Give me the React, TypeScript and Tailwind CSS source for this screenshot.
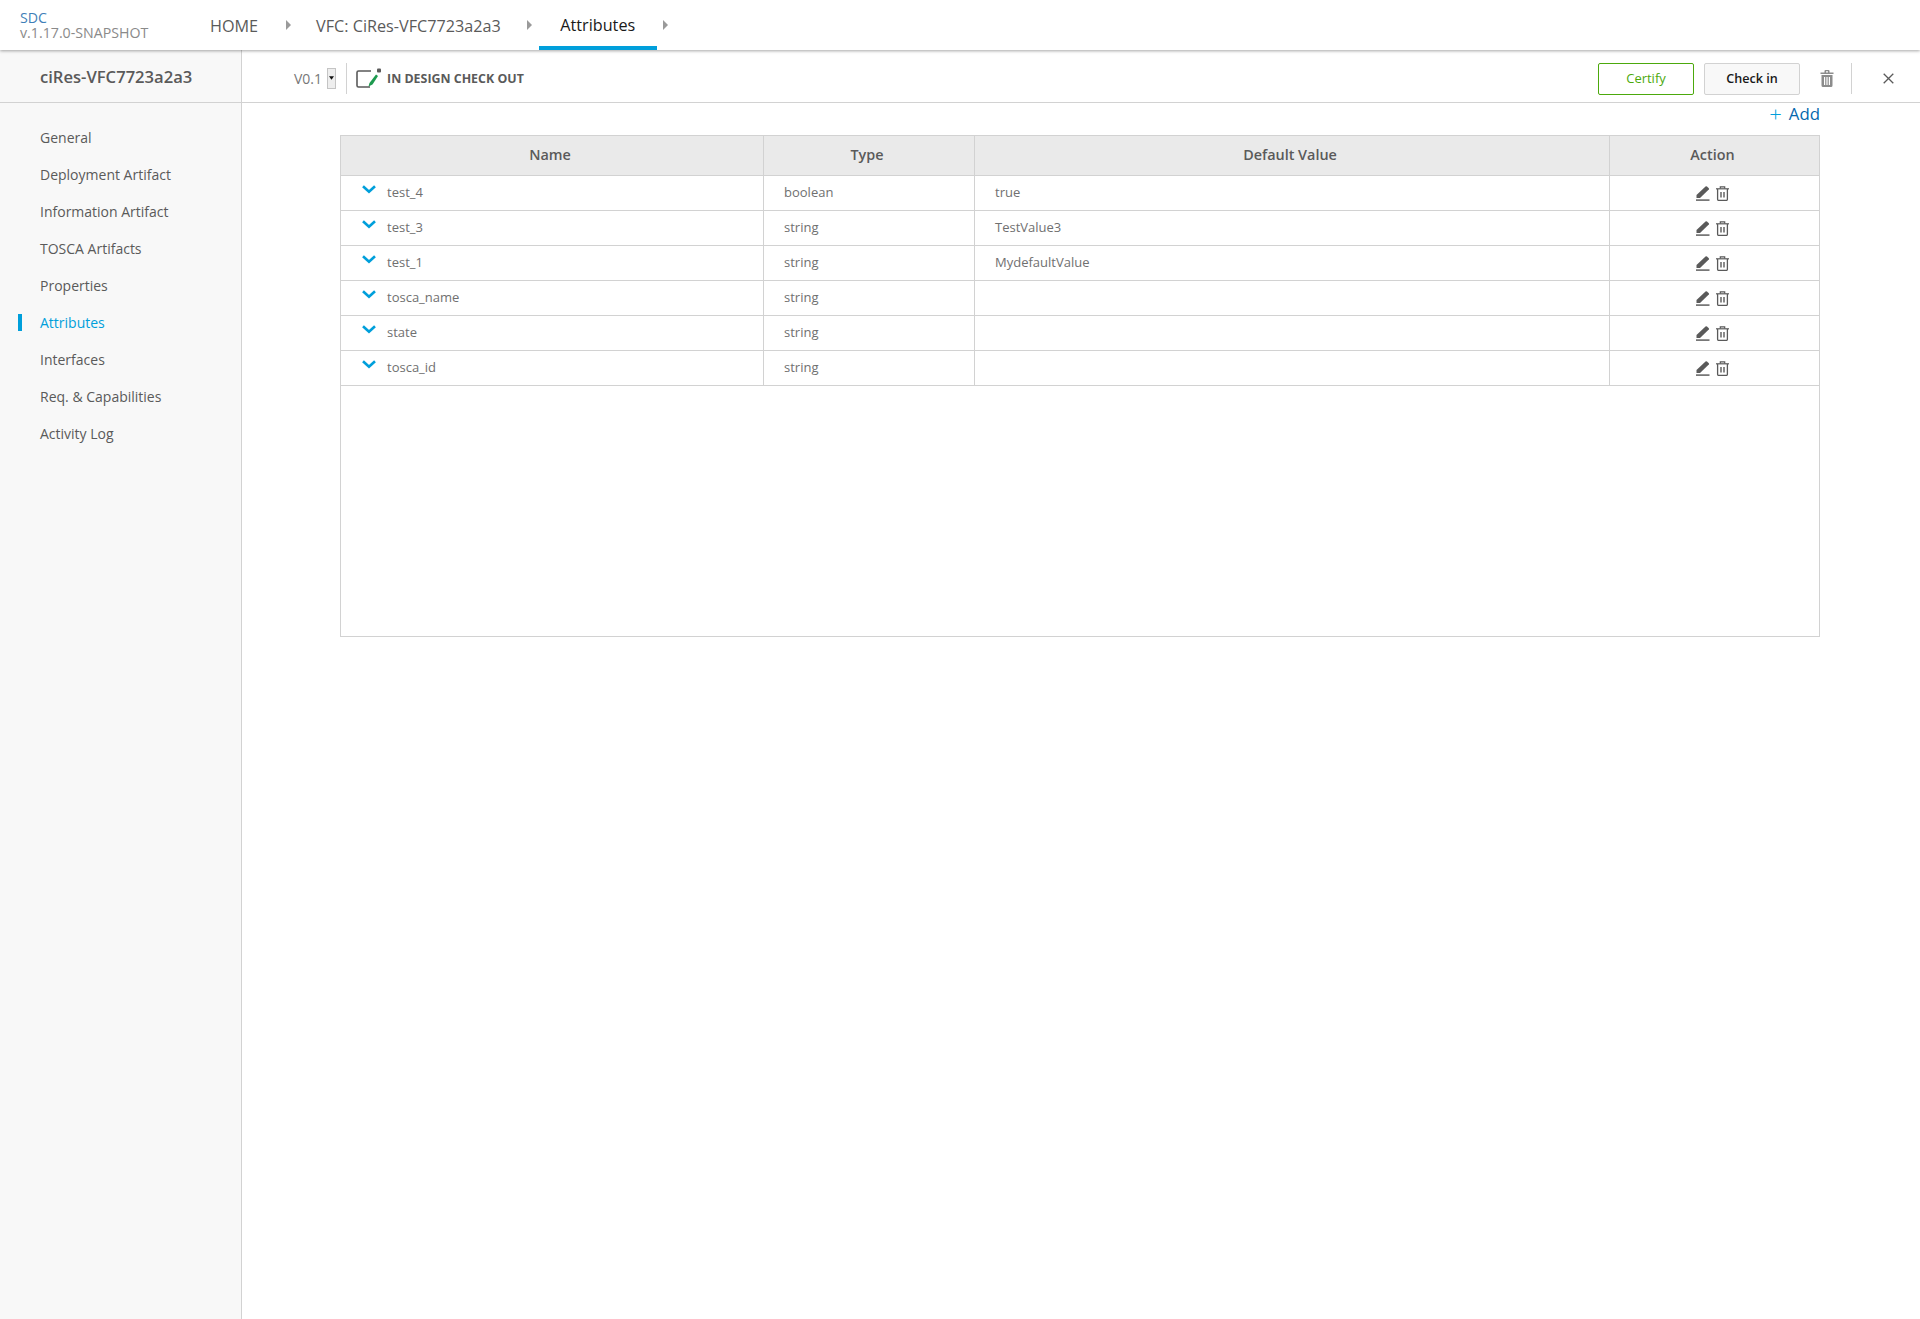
const navItems = [
  'General',
  'Deployment Artifact',
  'Information Artifact',
  'TOSCA Artifacts',
  'Properties',
  'Attributes',
  'Interfaces',
  'Req. & Capabilities',
  'Activity Log',
];

const rows = [
  { name: 'test_4', type: 'boolean', value: 'true' },
  { name: 'test_3', type: 'string', value: 'TestValue3' },
  { name: 'test_1', type: 'string', value: 'MydefaultValue' },
  { name: 'tosca_name', type: 'string', value: '' },
  { name: 'state', type: 'string', value: '' },
  { name: 'tosca_id', type: 'string', value: '' },
];

const Caret = ({ className }: { className: string }) => (
  <svg width="5" height="10" viewBox="0 0 5 10" className={className}>
    <path d="M0 0L5 5L0 10Z" fill="#9a9a9a" />
  </svg>
);

const Chevron = () => (
  <svg width="14" height="9" viewBox="0 0 14 9" className="absolute left-[21px] top-[9px]">
    <path d="M1 1.2L7 6.8L13 1.2" fill="none" stroke="#009fdb" strokeWidth="2.6" />
  </svg>
);

const PencilIcon = () => (
  <svg width="14" height="15" viewBox="0 0 14 15">
    <path d="M0.5 9L9.5 0.5Q10.3 0 11 0.5L12.8 2.2Q13.3 2.9 12.8 3.6L4 12H0.5Z" fill="#5a5a5a" />
    <rect x="0" y="13.3" width="13.5" height="1.6" fill="#6a6a6a" />
  </svg>
);

const TrashIcon = () => (
  <svg width="13" height="15" viewBox="0 0 13 15" fill="none" stroke="#5a5a5a">
    <path d="M0 2.8H13" strokeWidth="1.2" />
    <path d="M4.3 2.5V0.8H8.7V2.5" strokeWidth="1.2" />
    <path d="M1.6 3V13.2Q1.6 14.4 2.8 14.4H10.2Q11.4 14.4 11.4 13.2V3" strokeWidth="1.3" />
    <path d="M5 6V11.5M8 6V11.5" strokeWidth="1.4" />
  </svg>
);

const App = () => {
  return (
    <div className="flex h-[1319px] w-[1920px] flex-col overflow-hidden bg-white font-['Open_Sans',sans-serif] text-[#5a5a5a]">
      <header className="relative z-10 flex h-[50px] shrink-0 items-center bg-white shadow-[0_1px_3px_rgba(0,0,0,0.35)]">
        <div className="w-[191px] pb-[1px] pl-[20px] text-[14.2px] leading-[15px]">
          <div className="text-[#3f7fb8]">SDC</div>
          <div className="text-[#8a8a8a]">v.1.17.0-SNAPSHOT</div>
        </div>
        <div className="flex h-full items-center text-[16.2px]">
          <span className="ml-[19px] pt-[2px]">HOME</span>
          <Caret className="ml-[28px]" />
          <span className="ml-[25px] pt-[2px]">VFC: CiRes-VFC7723a2a3</span>
          <Caret className="ml-[26px]" />
          <span className="ml-[7px] flex h-full w-[118px] items-center justify-center border-b-[4px] border-[#009fdb] pt-[5px] font-medium text-[#191919]">
            Attributes
          </span>
          <Caret className="ml-[6px]" />
        </div>
      </header>

      <div className="flex min-h-0 flex-1">
        <aside className="w-[242px] shrink-0 border-r border-[#d2d2d2] bg-[#f8f8f8]">
          <div className="flex h-[53px] items-center border-b border-[#d2d2d2] pl-[40px] pt-[2px] text-[16.6px] font-semibold">
            ciRes-VFC7723a2a3
          </div>
          <nav className="flex flex-col pt-[16px]">
            {navItems.map((item) => (
              <div key={item} className="relative flex h-[37px] items-center pl-[40px] text-[14px]">
                {item === 'Attributes' && (
                  <span className="absolute left-[18px] top-[10px] h-[17px] w-[4px] bg-[#009fdb]" />
                )}
                <span className={item === 'Attributes' ? 'text-[#009fdb]' : ''}>{item}</span>
              </div>
            ))}
          </nav>
        </aside>

        <main className="min-w-0 flex-1">
          <div className="flex h-[53px] items-center border-b border-[#d2d2d2] pl-[52px] pr-[20px] pt-[4px]">
            <span className="text-[14px] text-[#777777]">V0.1</span>
            <span className="ml-[5px] flex h-[21px] w-[9px] items-center justify-center border border-[#c4c4c4] bg-[#eeeeee]">
              <svg width="5" height="4" viewBox="0 0 6 4">
                <path d="M0 0H6L3 4Z" fill="#111111" />
              </svg>
            </span>
            <span className="ml-[10px] h-[31px] w-px bg-[#d2d2d2]" />
            <svg width="26" height="20" viewBox="0 0 26 20" className="ml-[9px]">
              <path d="M15 3H2.5Q1 3 1 4.5V17.5Q1 19 2.5 19H14" fill="none" stroke="#5a5a5a" strokeWidth="1.6" />
              <rect x="21" y="0.5" width="4" height="4" rx="1" fill="#5a5a5a" />
              <path d="M20 6.5L22 8L16.5 16.5L12.5 18.5L13.5 15Z" fill="#1d9a4f" />
            </svg>
            <span className="ml-[5px] pt-[2px] text-[12.4px] font-bold">IN DESIGN CHECK OUT</span>

            <div className="ml-auto flex items-center pt-[1px]">
              <button className="h-[32px] w-[96px] rounded-[2px] border border-[#4ca90c] bg-white pt-[1px] text-[13px] font-medium text-[#4ca90c]">
                Certify
              </button>
              <button className="ml-[10px] h-[32px] w-[96px] rounded-[2px] border border-[#d2d2d2] bg-[#f8f8f8] pt-[1px] text-[12.6px] font-semibold text-[#191919]">
                Check in
              </button>
              <svg width="14" height="17" viewBox="0 0 14 17" className="ml-[20px]" fill="#8c8c8c">
                <path d="M0.5 2.5H4.5V1Q4.5 0 5.5 0H8.5Q9.5 0 9.5 1V2.5H13.5V4H0.5ZM6 1.2V2.5H8V1.2Z" />
                <path d="M1.5 5H12.5V15.5Q12.5 17 11 17H3Q1.5 17 1.5 15.5ZM4 7V15H5.2V7ZM6.4 7V15H7.6V7ZM8.8 7V15H10V7Z" />
              </svg>
              <span className="ml-[17px] h-[31px] w-px bg-[#d2d2d2]" />
              <svg width="11" height="11" viewBox="0 0 11 11" className="ml-[31px] mr-[6px]">
                <path d="M0.7 0.7L10.3 10.3M10.3 0.7L0.7 10.3" stroke="#5a5a5a" strokeWidth="1.3" />
              </svg>
            </div>
          </div>

          <div className="ml-[98px] w-[1480px]">
            <div className="flex h-[32px] items-start justify-end text-[#0568ae]">
              <span className="mr-[7px] mt-[-1px] text-[22px] font-light leading-none text-[#009fdb]">+</span>
              <span className="text-[16.8px] font-medium leading-[22px]">Add</span>
            </div>

            <div className="h-[502px] border border-[#d2d2d2]">
              <div className="grid h-[40px] grid-cols-[423px_211px_635px_1fr] border-b border-[#d2d2d2] bg-[#eaeaea] text-[14.4px] font-semibold">
                <div className="flex items-center justify-center border-r border-[#d2d2d2] pb-[2px] pr-[4px]">Name</div>
                <div className="flex items-center justify-center border-r border-[#d2d2d2] pb-[2px] pr-[4px]">Type</div>
                <div className="flex items-center justify-center border-r border-[#d2d2d2] pb-[2px] pr-[4px]">Default Value</div>
                <div className="flex items-center justify-center pb-[2px] pr-[4px]">Action</div>
              </div>
              {rows.map((row) => (
                <div
                  key={row.name}
                  className="grid h-[35px] grid-cols-[423px_211px_635px_1fr] border-b border-[#d2d2d2] text-[13px] text-[#707070]"
                >
                  <div className="relative flex items-center border-r border-[#d2d2d2] pl-[46px]">
                    <Chevron />
                    {row.name}
                  </div>
                  <div className="flex items-center border-r border-[#d2d2d2] pl-[20px]">{row.type}</div>
                  <div className="flex items-center border-r border-[#d2d2d2] pl-[20px]">{row.value}</div>
                  <div className="flex items-center justify-center gap-[6px] pr-[4px] pt-[1px]">
                    <PencilIcon />
                    <TrashIcon />
                  </div>
                </div>
              ))}
            </div>
          </div>
        </main>
      </div>
    </div>
  );
};

export default App;
